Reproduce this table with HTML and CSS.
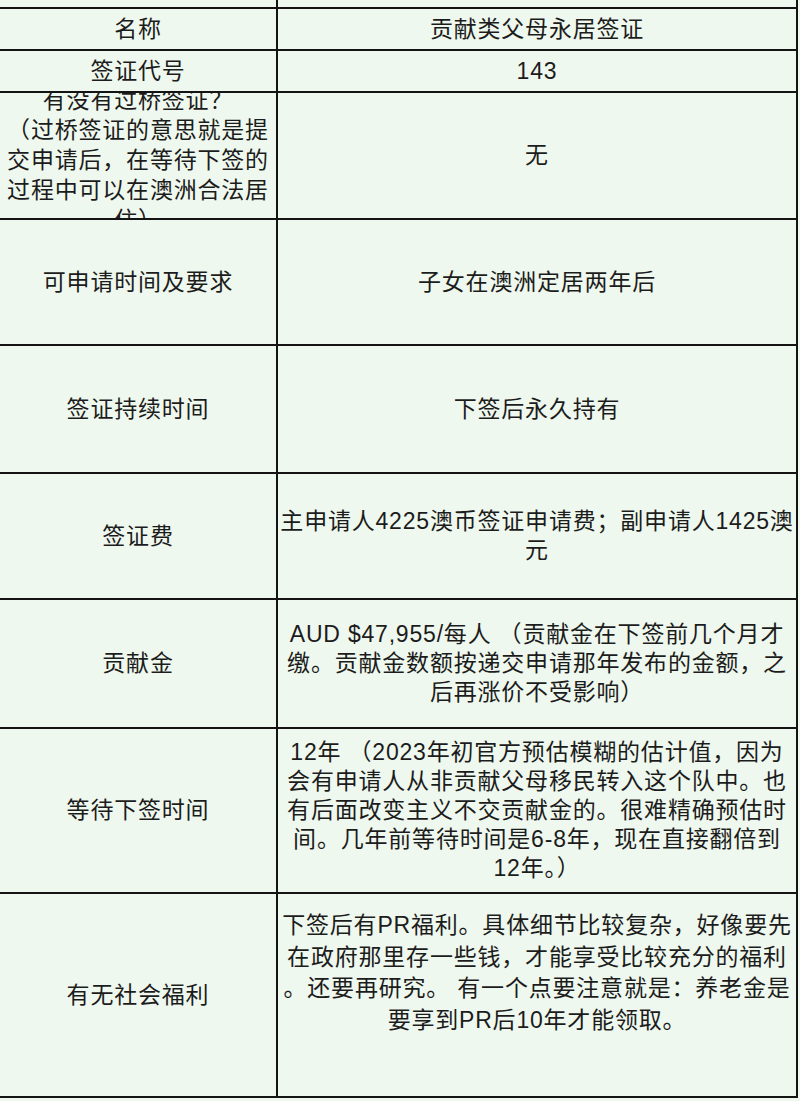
FILE: index.html
```html
<!DOCTYPE html>
<html lang="zh-CN">
<head>
<meta charset="utf-8">
<title>贡献类父母永居签证</title>
<link rel="stylesheet" href="styles.css">
</head>
<body>
<div class="sheet">
  <div class="cell cell--left row-top"></div>
  <div class="cell cell--right row-top"></div>

  <div class="cell cell--left"><div class="txt">名称</div></div>
  <div class="cell cell--right"><div class="txt">贡献类父母永居签证</div></div>

  <div class="cell cell--left"><div class="txt">签证代号</div></div>
  <div class="cell cell--right"><div class="txt">143</div></div>

  <div class="cell cell--left cell--clip"><div class="txt txt--tall">有没有过桥签证？<br>（过桥签证的意思就是提<br>交申请后，在等待下签的<br>过程中可以在澳洲合法居<br>住）</div></div>
  <div class="cell cell--right"><div class="txt">无</div></div>

  <div class="cell cell--left"><div class="txt">可申请时间及要求</div></div>
  <div class="cell cell--right"><div class="txt">子女在澳洲定居两年后</div></div>

  <div class="cell cell--left"><div class="txt">签证持续时间</div></div>
  <div class="cell cell--right"><div class="txt">下签后永久持有</div></div>

  <div class="cell cell--left"><div class="txt">签证费</div></div>
  <div class="cell cell--right"><div class="txt">主申请人4225澳币签证申请费；副申请人1425澳<br>元</div></div>

  <div class="cell cell--left"><div class="txt">贡献金</div></div>
  <div class="cell cell--right"><div class="txt">AUD $47,955/每人 （贡献金在下签前几个月才<br>缴。贡献金数额按递交申请那年发布的金额，之<br>后再涨价不受影响）</div></div>

  <div class="cell cell--left"><div class="txt">等待下签时间</div></div>
  <div class="cell cell--right"><div class="txt">12年 （2023年初官方预估模糊的估计值，因为<br>会有申请人从非贡献父母移民转入这个队中。也<br>有后面改变主义不交贡献金的。很难精确预估时<br>间。几年前等待时间是6-8年，现在直接翻倍到<br>12年。）</div></div>

  <div class="cell cell--left"><div class="txt">有无社会福利</div></div>
  <div class="cell cell--right cell--raised"><div class="txt txt--loose">下签后有PR福利。具体细节比较复杂，好像要先<br>在政府那里存一些钱，才能享受比较充分的福利<br>。还要再研究。 有一个点要注意就是：养老金是<br>要享到PR后10年才能领取。</div></div>
</div>
</body>
</html>
```

FILE: styles.css
```css
html, body {
  margin: 0;
  padding: 0;
  background: #eff8ee;
}

body {
  width: 800px;
  height: 1101px;
  overflow: hidden;
  font-family: "Liberation Sans", "Noto Sans CJK SC", sans-serif;
  color: #1c1c1c;
}

.sheet {
  display: grid;
  grid-template-columns: 278px 520px;
  grid-template-rows: 9px 42px 42px 127px 126px 128px 126px 129px 165px 204px;
  background: #eff8ee;
}

.cell {
  box-sizing: border-box;
  border-bottom: 2px solid #141414;
  border-right: 2px solid #141414;
  display: flex;
  align-items: center;
  justify-content: center;
  overflow: hidden;
  min-height: 0;
}

.cell--clip {
  padding-top: 8px;
}

.cell--raised {
  padding-bottom: 44px;
}

.txt {
  font-size: 23px;
  line-height: 29px;
  letter-spacing: 0.8px;
  text-align: center;
  white-space: nowrap;
  flex: none;
}

.txt--tall {
  line-height: 30px;
}

.txt--loose {
  line-height: 31.5px;
}
```
